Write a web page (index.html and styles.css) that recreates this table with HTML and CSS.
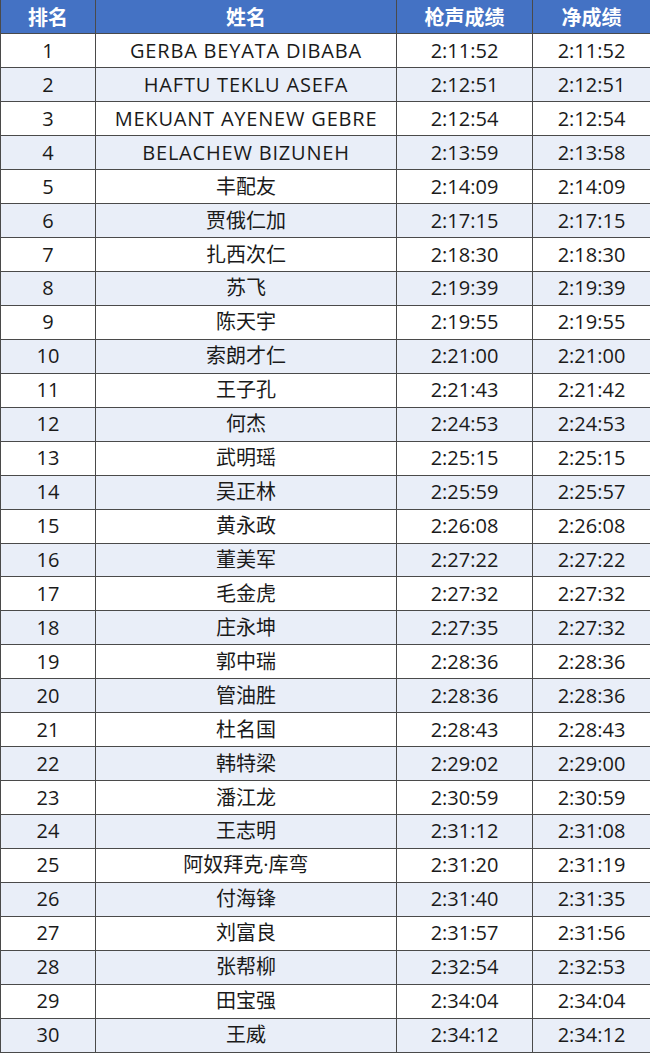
FILE: index.html
```html
<!DOCTYPE html>
<html lang="zh">
<head>
<meta charset="utf-8">
<link rel="stylesheet" href="styles.css">
</head>
<body>
<table class="results">
<colgroup><col class="c-rank"><col class="c-name"><col class="c-gun"><col class="c-net"></colgroup>
<thead>
<tr><th>排名</th><th>姓名</th><th>枪声成绩</th><th>净成绩</th></tr>
</thead>
<tbody>
<tr><td>1</td><td class="latin">GERBA BEYATA DIBABA</td><td>2:11:52</td><td>2:11:52</td></tr>
<tr><td>2</td><td class="latin">HAFTU TEKLU ASEFA</td><td>2:12:51</td><td>2:12:51</td></tr>
<tr><td>3</td><td class="latin">MEKUANT AYENEW GEBRE</td><td>2:12:54</td><td>2:12:54</td></tr>
<tr><td>4</td><td class="latin">BELACHEW BIZUNEH</td><td>2:13:59</td><td>2:13:58</td></tr>
<tr><td>5</td><td>丰配友</td><td>2:14:09</td><td>2:14:09</td></tr>
<tr><td>6</td><td>贾俄仁加</td><td>2:17:15</td><td>2:17:15</td></tr>
<tr><td>7</td><td>扎西次仁</td><td>2:18:30</td><td>2:18:30</td></tr>
<tr><td>8</td><td>苏飞</td><td>2:19:39</td><td>2:19:39</td></tr>
<tr><td>9</td><td>陈天宇</td><td>2:19:55</td><td>2:19:55</td></tr>
<tr><td>10</td><td>索朗才仁</td><td>2:21:00</td><td>2:21:00</td></tr>
<tr><td>11</td><td>王子孔</td><td>2:21:43</td><td>2:21:42</td></tr>
<tr><td>12</td><td>何杰</td><td>2:24:53</td><td>2:24:53</td></tr>
<tr><td>13</td><td>武明瑶</td><td>2:25:15</td><td>2:25:15</td></tr>
<tr><td>14</td><td>吴正林</td><td>2:25:59</td><td>2:25:57</td></tr>
<tr><td>15</td><td>黄永政</td><td>2:26:08</td><td>2:26:08</td></tr>
<tr><td>16</td><td>董美军</td><td>2:27:22</td><td>2:27:22</td></tr>
<tr><td>17</td><td>毛金虎</td><td>2:27:32</td><td>2:27:32</td></tr>
<tr><td>18</td><td>庄永坤</td><td>2:27:35</td><td>2:27:32</td></tr>
<tr><td>19</td><td>郭中瑞</td><td>2:28:36</td><td>2:28:36</td></tr>
<tr><td>20</td><td>管油胜</td><td>2:28:36</td><td>2:28:36</td></tr>
<tr><td>21</td><td>杜名国</td><td>2:28:43</td><td>2:28:43</td></tr>
<tr><td>22</td><td>韩特梁</td><td>2:29:02</td><td>2:29:00</td></tr>
<tr><td>23</td><td>潘江龙</td><td>2:30:59</td><td>2:30:59</td></tr>
<tr><td>24</td><td>王志明</td><td>2:31:12</td><td>2:31:08</td></tr>
<tr><td>25</td><td>阿奴拜克·库弯</td><td>2:31:20</td><td>2:31:19</td></tr>
<tr><td>26</td><td>付海锋</td><td>2:31:40</td><td>2:31:35</td></tr>
<tr><td>27</td><td>刘富良</td><td>2:31:57</td><td>2:31:56</td></tr>
<tr><td>28</td><td>张帮柳</td><td>2:32:54</td><td>2:32:53</td></tr>
<tr><td>29</td><td>田宝强</td><td>2:34:04</td><td>2:34:04</td></tr>
<tr><td>30</td><td>王威</td><td>2:34:12</td><td>2:34:12</td></tr>
</tbody>
</table>
</body>
</html>
```
FILE: styles.css
```css
html, body {
  margin: 0;
  padding: 0;
  background: #ffffff;
}
.results {
  width: 650px;
  border-collapse: collapse;
  table-layout: fixed;
  font-family: "Open Sans", "Noto Sans CJK SC", sans-serif;
  font-size: 20px;
  color: #1a1a1a;
}
.c-rank { width: 95px; }
.c-name { width: 301px; }
.c-gun { width: 136px; }
.c-net { width: 118px; }
.results tr {
  height: 33.95px;
}
.results th,
.results td {
  border: 1px solid #4a4a4a;
  padding: 0;
  text-align: center;
  vertical-align: middle;
  line-height: 1;
  white-space: nowrap;
}
.results td.latin {
  letter-spacing: 0.8px;
}
.results th {
  background: #4472c4;
  color: #ffffff;
  font-weight: bold;
  font-family: "Noto Sans CJK SC", sans-serif;
  font-size: 20px;
  border-top: none;
}
.results tbody tr:nth-child(even) td {
  background: #e9eef8;
}
```
